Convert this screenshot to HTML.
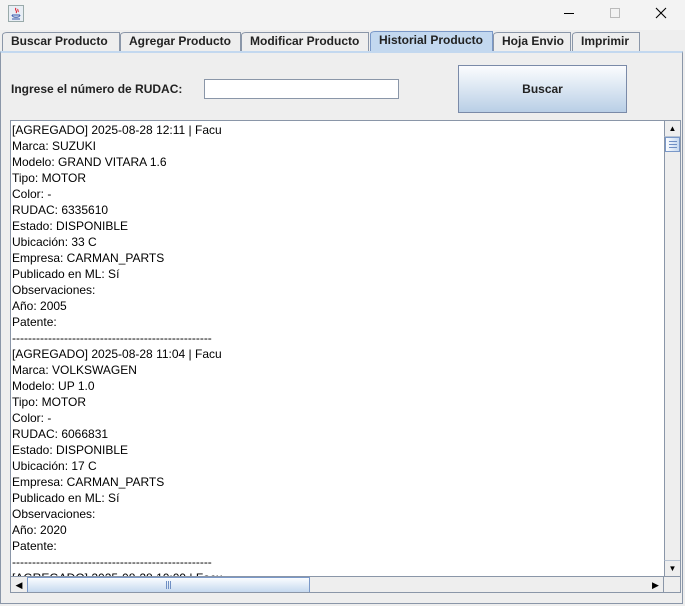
<!DOCTYPE html>
<html><head><meta charset="utf-8"><style>
*{margin:0;padding:0;box-sizing:border-box}
body{width:685px;height:606px;background:#eeeeee;font-family:"Liberation Sans",Arial,sans-serif;position:relative;overflow:hidden;font-size:12px;color:#000}
.abs{position:absolute}
.tb{left:0;top:0;width:685px;height:30px;background:#f3f3f3}
.tab{position:absolute;top:32px;height:19px;border:1px solid #8a96a8;border-bottom:none;background:#eeeeee;font-weight:bold;font-size:12px;line-height:17px;padding-left:8px;color:#222;border-top-left-radius:5px 3px}
.sel{background:#c3d8ef;border-color:#7a98c8;top:31px;height:20px}
pre{font-family:"Liberation Sans",Arial,sans-serif;font-size:12px;line-height:16px}
</style></head><body>
<div class="abs tb"></div>
<div class="abs" style="left:8px;top:5px;width:16px;height:17px;border:1px solid #9aa;background:#e8eef5"></div>
<svg class="abs" style="left:9px;top:6px" width="14" height="15"><path d="M7 2c-2 2 2 3 0 5M9 3c-1 1 1 2 0 3" stroke="#d23" fill="none"/><path d="M3 9h8M3 9c0 3 8 3 8 0M3 13h8" stroke="#35a" fill="none"/></svg>
<div class="abs" style="left:564px;top:13px;width:10px;height:1px;background:#000"></div>
<div class="abs" style="left:610px;top:8px;width:10px;height:10px;border:1px solid #bbb"></div>
<svg class="abs" style="left:655px;top:7px" width="12" height="12"><path d="M1 1L11 11M11 1L1 11" stroke="#000" stroke-width="1.1"/></svg>

<div class="abs" style="left:0;top:51px;width:683px;height:553px;border:1px solid #8a96a8;border-top:2px solid #c3d8ef;background:#eeeeee"></div>
<div class="tab" style="left:2px;width:118px">Buscar Producto</div>
<div class="tab" style="left:120px;width:121px">Agregar Producto</div>
<div class="tab" style="left:241px;width:128px">Modificar Producto</div>
<div class="tab sel" style="left:370px;width:123px">Historial Producto</div>
<div class="tab" style="left:493px;width:78px">Hoja Envio</div>
<div class="tab" style="left:572px;width:68px">Imprimir</div>

<div class="abs" style="left:11px;top:82px;font-weight:bold;color:#222">Ingrese el número de RUDAC:</div>
<div class="abs" style="left:204px;top:79px;width:195px;height:20px;background:#fff;border:1px solid #8a96a8"></div>
<div class="abs" style="left:458px;top:65px;width:169px;height:48px;border:1px solid #7a8aa8;background:linear-gradient(#fbfcfe,#b9cfe6);text-align:center;line-height:46px;font-weight:bold;color:#222">Buscar</div>

<div class="abs" style="left:10px;top:120px;width:671px;height:473px;border:1px solid #8a96a8;background:#fff;overflow:hidden">
<pre style="position:absolute;left:1px;top:1px">[AGREGADO] 2025-08-28 12:11 | Facu
Marca: SUZUKI
Modelo: GRAND VITARA 1.6
Tipo: MOTOR
Color: -
RUDAC: 6335610
Estado: DISPONIBLE
Ubicación: 33 C
Empresa: CARMAN_PARTS
Publicado en ML: Sí
Observaciones:
Año: 2005
Patente:
--------------------------------------------------
[AGREGADO] 2025-08-28 11:04 | Facu
Marca: VOLKSWAGEN
Modelo: UP 1.0
Tipo: MOTOR
Color: -
RUDAC: 6066831
Estado: DISPONIBLE
Ubicación: 17 C
Empresa: CARMAN_PARTS
Publicado en ML: Sí
Observaciones:
Año: 2020
Patente:
--------------------------------------------------
[AGREGADO] 2025-08-28 10:09 | Facu</pre>
<!-- vertical scrollbar -->
<div class="abs" style="left:653px;top:0;width:16px;height:455px;background:#eeeeee;border-left:1px solid #8a96a8"></div>
<div class="abs" style="left:653px;top:0;width:16px;height:16px;border-left:1px solid #8a96a8;border-bottom:1px solid #b8c4d4;text-align:center;font-size:8px;line-height:16px">▲</div>
<div class="abs" style="left:654px;top:16px;width:15px;height:15px;border:1px solid #7a98c8;background:linear-gradient(90deg,#fafcff,#c6d9ef)"></div>
<div class="abs" style="left:658px;top:20px;width:8px;height:1px;background:#6f8fc4;box-shadow:0 3px #6f8fc4,0 6px #6f8fc4"></div>
<div class="abs" style="left:653px;top:439px;width:16px;height:16px;border-left:1px solid #8a96a8;border-top:1px solid #b8c4d4;text-align:center;font-size:8px;line-height:16px">▼</div>
<!-- horizontal scrollbar -->
<div class="abs" style="left:0;top:455px;width:669px;height:17px;background:#eeeeee;border-top:1px solid #8a96a8"></div>
<div class="abs" style="left:0;top:456px;width:16px;height:16px;text-align:center;font-size:9px;line-height:16px">◀</div>
<div class="abs" style="left:16px;top:456px;width:283px;height:16px;border:1px solid #7a98c8;background:linear-gradient(#fafcff,#c6d9ef)"></div>
<div class="abs" style="left:155px;top:460px;width:1px;height:8px;background:#6f8fc4;box-shadow:2px 0 #6f8fc4,4px 0 #6f8fc4"></div>
<div class="abs" style="left:637px;top:456px;width:16px;height:16px;text-align:center;font-size:9px;line-height:16px;border-right:1px solid #8a96a8">▶</div>
</div>
</body></html>
